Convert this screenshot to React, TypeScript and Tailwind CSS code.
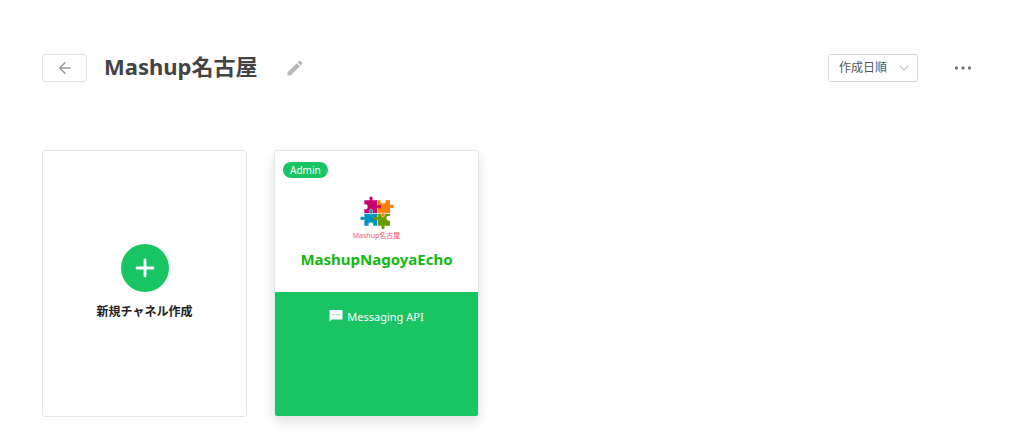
import { useState } from 'react';
import { ArrowLeft, ChevronDown } from 'lucide-react';
import { MdEdit } from 'react-icons/md';

interface Channel {
  name: string;
  role: string;
  type: string;
}

const channels: Channel[] = [{ name: 'MashupNagoyaEcho', role: 'Admin', type: 'Messaging API' }];

function PuzzleLogo() {
  return (
    <svg viewBox="58 36 102 99" className="h-[33px] w-[34px]" aria-hidden="true">
      {/* Pieces */}
      <path fill="#c9006b" d="M71 49h38v38H71V75c7 3 10-1 10-7s-4-9-10-6z" />
      <path fill="#ff7f00" d="M111 49h9c-3 6 1 10 7 10s10-4 7-10h14v38h-37z" />
      <path fill="#0093c0" d="M71 89h38v36H97c3-7-1-10-6-10s-9 3-7 10H71z" />
      <path fill="#6b9a00" d="M111 89h37v7c-7-2-11 1-11 7s5 9 11 7v15h-37z" />
      {/* Outer knobs */}
      <path fill="#c9006b" d="M87 50v-4a5 5 0 1 1 8 0v4z" />
      <path fill="#ff7f00" d="M147 63h4a5 5 0 1 1 0 8h-4z" />
      <path fill="#0093c0" d="M72 99h-5a5 5 0 1 0 0 8h5z" />
      <path fill="#6b9a00" d="M123 124v3a5 5 0 1 0 8 0v-3z" />
      {/* Inner knobs */}
      <path fill="#c9006b" d="M108 64h5a5 5 0 1 1 0 7h-5z" />
      <path fill="#0093c0" stroke="#fff" strokeWidth="1.5" d="M88 90v-6a5 5 0 1 1 7 0v6z" />
      <path fill="#6b9a00" d="M112 99h-7a5 5 0 1 0 0 8h7z" />
      <path fill="#ff7f00" stroke="#fff" strokeWidth="1.5" d="M123 86v5a5 5 0 1 0 8 0v-5z" />
    </svg>
  );
}

function MessageIcon() {
  return (
    <svg viewBox="0 0 14 12" className="mt-[2px] h-3 w-[14px]" aria-hidden="true">
      <path fill="#fff" d="M.5 0h13v9.6H2.6L.5 11.8z" />
      <path fill="#19c463" d="M3.6 4.2h1.3v1H3.6zM6.4 4.2h1.3v1H6.4zM9.2 4.2h1.3v1H9.2z" />
    </svg>
  );
}

function NewChannelCard() {
  return (
    <button
      type="button"
      className="flex h-[267px] w-[205px] flex-col items-center justify-center rounded-[3px] border border-[#e3e8ef] bg-white"
    >
      <span className="flex size-12 items-center justify-center rounded-full bg-[#19c463]">
        <svg viewBox="0 0 20 20" className="size-5" aria-hidden="true">
          <path d="M10 2v16M2 10h16" stroke="#fff" strokeWidth="2.8" strokeLinecap="round" />
        </svg>
      </span>
      <span className="mt-2 text-xs leading-6 font-bold text-[#222]">新規チャネル作成</span>
    </button>
  );
}

function ChannelCard({ channel }: { channel: Channel }) {
  return (
    <a
      href="#channel"
      className="flex h-[267px] w-[205px] flex-col overflow-hidden rounded-[3px] border border-[#e3e8ef] bg-white shadow-[0_5px_12px_rgba(0,0,0,0.12)]"
    >
      <div className="flex h-[141px] flex-col px-2 pt-[11px]">
        <span className="self-start rounded-full bg-[#19c463] px-[7px] text-[10px] leading-4 text-white">
          {channel.role}
        </span>
        <div className="mt-[18px] flex flex-col items-center">
          <PuzzleLogo />
          <span className="text-[7px] leading-[14px] text-[#ff5a68]">Mashup名古屋</span>
          <h2 className="mt-[6px] text-[15px] leading-5 font-bold text-[#13b813]">{channel.name}</h2>
        </div>
      </div>
      <div className="-mx-px -mb-px flex flex-1 items-start justify-center gap-1 bg-[#19c463] pt-4 text-[11px] leading-[18px] text-white">
        <MessageIcon />
        {channel.type}
      </div>
    </a>
  );
}

export default function App() {
  const [order, setOrder] = useState('created');

  return (
    <main className="min-h-screen bg-white pt-[54px] pr-[52px] pb-6 pl-[42px] font-['Noto_Sans','Noto_Sans_CJK_JP',sans-serif]">
      <header className="flex h-7 items-center">
        <button
          type="button"
          aria-label="戻る"
          className="flex h-7 w-[45px] items-center justify-center rounded-[3px] border border-[#e0e6ee] text-[#999]"
        >
          <ArrowLeft size={18} strokeWidth={2} />
        </button>
        <h1 className="ml-[17px] pb-1 text-[22px] leading-6 font-bold text-[#444]">Mashup名古屋</h1>
        <button type="button" aria-label="名前を編集" className="ml-7 text-[#b7b7b7]">
          <MdEdit size={20} />
        </button>

        <div className="relative ml-auto">
          <select
            aria-label="並び順"
            value={order}
            onChange={e => setOrder(e.target.value)}
            className="block h-7 w-[90px] appearance-none rounded-[3px] border border-[#d4d9e0] bg-white pl-[10px] text-xs text-[#555]"
          >
            <option value="created">作成日順</option>
            <option value="name">名前順</option>
          </select>
          <ChevronDown
            size={16}
            strokeWidth={2}
            className="pointer-events-none absolute top-[6px] right-[6px] text-[#c4c9d1]"
          />
        </div>
        <button type="button" aria-label="メニュー" className="ml-9 text-[#777]">
          <svg viewBox="0 0 18 4" className="h-1 w-[18px]" fill="currentColor" aria-hidden="true">
            <circle cx="2.5" cy="2" r="1.7" />
            <circle cx="9" cy="2" r="1.7" />
            <circle cx="15.5" cy="2" r="1.7" />
          </svg>
        </button>
      </header>

      <section className="mt-[68px] flex flex-wrap gap-[27px]">
        <NewChannelCard />
        {channels.map(channel => (
          <ChannelCard key={channel.name} channel={channel} />
        ))}
      </section>
    </main>
  );
}
